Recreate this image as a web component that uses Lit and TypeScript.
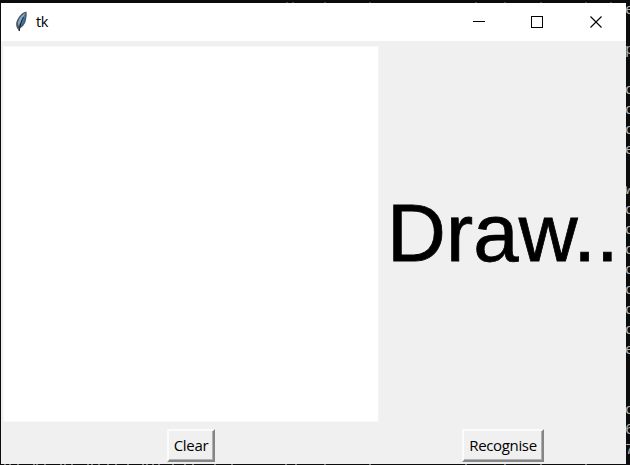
import { LitElement, html, css, svg } from "lit";
import { customElement } from "lit/decorators.js";

const CONSOLE_LINES = ["e", "", "p", "", "c", "c", "c", "e", "", "w", "c", "c", "c", "c", "c", "c", "c", "e", "", "", "c", "6", "7"];
const TOP_SPECKS = [286, 292, 324, 369, 475, 504, 540, 585, 610];
const BOTTOM_SPECKS = [4, 9, 17, 33, 36, 44, 60, 64, 71, 87, 91, 98, 107, 115, 127, 142, 146, 152, 158, 172, 184, 192, 214, 231, 285, 295, 324, 369, 465, 504, 540, 585];

@customElement("app-root")
export class AppRoot extends LitElement {
  static styles = css`
    :host {
      display: flex;
      flex-direction: column;
      width: 630px;
      height: 465px;
      overflow: hidden;
      background: #0c0c0c;
      font-family: "Open Sans", "Noto Sans", sans-serif;
      color: #000;
    }
    svg { display: block; flex: none; }
    .middle { display: flex; height: 461px; padding-left: 1px; }
    .window { width: 625px; background: #f0f0f0; display: flex; flex-direction: column; }
    .titlebar { height: 38px; flex: none; background: #fff; display: flex; align-items: center; }
    .feather { margin-left: 14px; }
    .title { flex: 1; margin-left: 7px; font-size: 14.5px; line-height: 20px; letter-spacing: -0.3px; }
    .content { height: 385px; flex: none; display: grid; grid-template-columns: 380px 245px; align-items: center; }
    .canvas { width: 374px; height: 374px; margin-left: 2px; background: #fff; border: 1px solid #f8f8f8; border-right-color: #f4f4f4; box-sizing: content-box; }
    .result { font: 81.5px/92px "Liberation Sans", Arial, sans-serif; -webkit-text-stroke: 0.8px #000; letter-spacing: 0.15px; padding: 0 0 1px 6px; white-space: nowrap; }
    .actions { display: grid; grid-template-columns: 380px 245px; justify-items: center; padding-top: 3px; }
    button {
      box-sizing: border-box;
      height: 33px;
      padding: 0 0 2px;
      background: #f0f0f0;
      border: 2px solid;
      border-color: #fbfbfb #858585 #858585 #fbfbfb;
      box-shadow: inset -1px -1px #b0b0b0;
      font: 15px/20px "Open Sans", "Noto Sans", sans-serif;
      color: #000;
      white-space: nowrap;
    }
    .clear { width: 48px; letter-spacing: -0.3px; }
    .recognise { width: 82px; letter-spacing: -0.35px; margin-left: -1px; }
    .console {
      width: 4px;
      overflow: hidden;
      background: #0c0c0c;
      color: #b4b4b4;
      font: 15px/20px "Liberation Mono", monospace;
    }
    .line { height: 20px; text-indent: -1px; }
    .line:first-child { margin-top: -2px; }
  `;

  private specks(xs: number[], height: number, y: number, color: string) {
    return html`<svg width="630" height=${height} shape-rendering="crispEdges">
      ${xs.map((x) => svg`<rect x=${x} y=${y} width="2" height="1" fill=${color} />`)}
    </svg>`;
  }

  render() {
    return html`
      ${this.specks(TOP_SPECKS, 3, 2, "#444")}
      <div class="middle">
        <main class="window">
          <header class="titlebar">
            <svg class="feather" width="14" height="22" viewBox="0 0 14 22">
              <path d="M11.4 .6C7 1.2 3 6.4 1.4 11.1c-.7 2.6-.1 4.7.8 6.1l2 3.3.6-3.3c3.4-1.2 5.3-4.5 6.2-8.2.4-2.7 1.3-5.5.4-8.4z" fill="#4f5963" />
              <path d="M10.4 2C6.8 4 3.6 8 2.9 12l.5 3L7 9z" fill="#85aebe" />
              <path d="M10.8 2.5C10.2 7 8.8 12.8 5 15.8L6.4 9z" fill="#3977c4" />
              <path d="M8.6 6C6.5 9.5 5 13.6 4.3 20" fill="none" stroke="#17202a" stroke-width="1" />
            </svg>
            <span class="title">tk</span>
            <svg width="130" height="38" shape-rendering="crispEdges" fill="none" stroke="#000">
              <path d="M0 18.5h12" />
              <rect x="58.5" y="13.5" width="11" height="11" />
              <path d="M117.5 13.5l11 11M128.5 13.5l-11 11" shape-rendering="auto" stroke-width="1.1" />
            </svg>
            <svg width="23" height="38"></svg>
          </header>
          <section class="content">
            <div class="canvas"></div>
            <div class="result">Draw..</div>
          </section>
          <footer class="actions">
            <button class="clear">Clear</button>
            <button class="recognise">Recognise</button>
          </footer>
        </main>
        <aside class="console">
          ${CONSOLE_LINES.map((c) => html`<div class="line">${c}</div>`)}
        </aside>
      </div>
      ${this.specks(BOTTOM_SPECKS, 1, 0, "#777")}
    `;
  }
}
